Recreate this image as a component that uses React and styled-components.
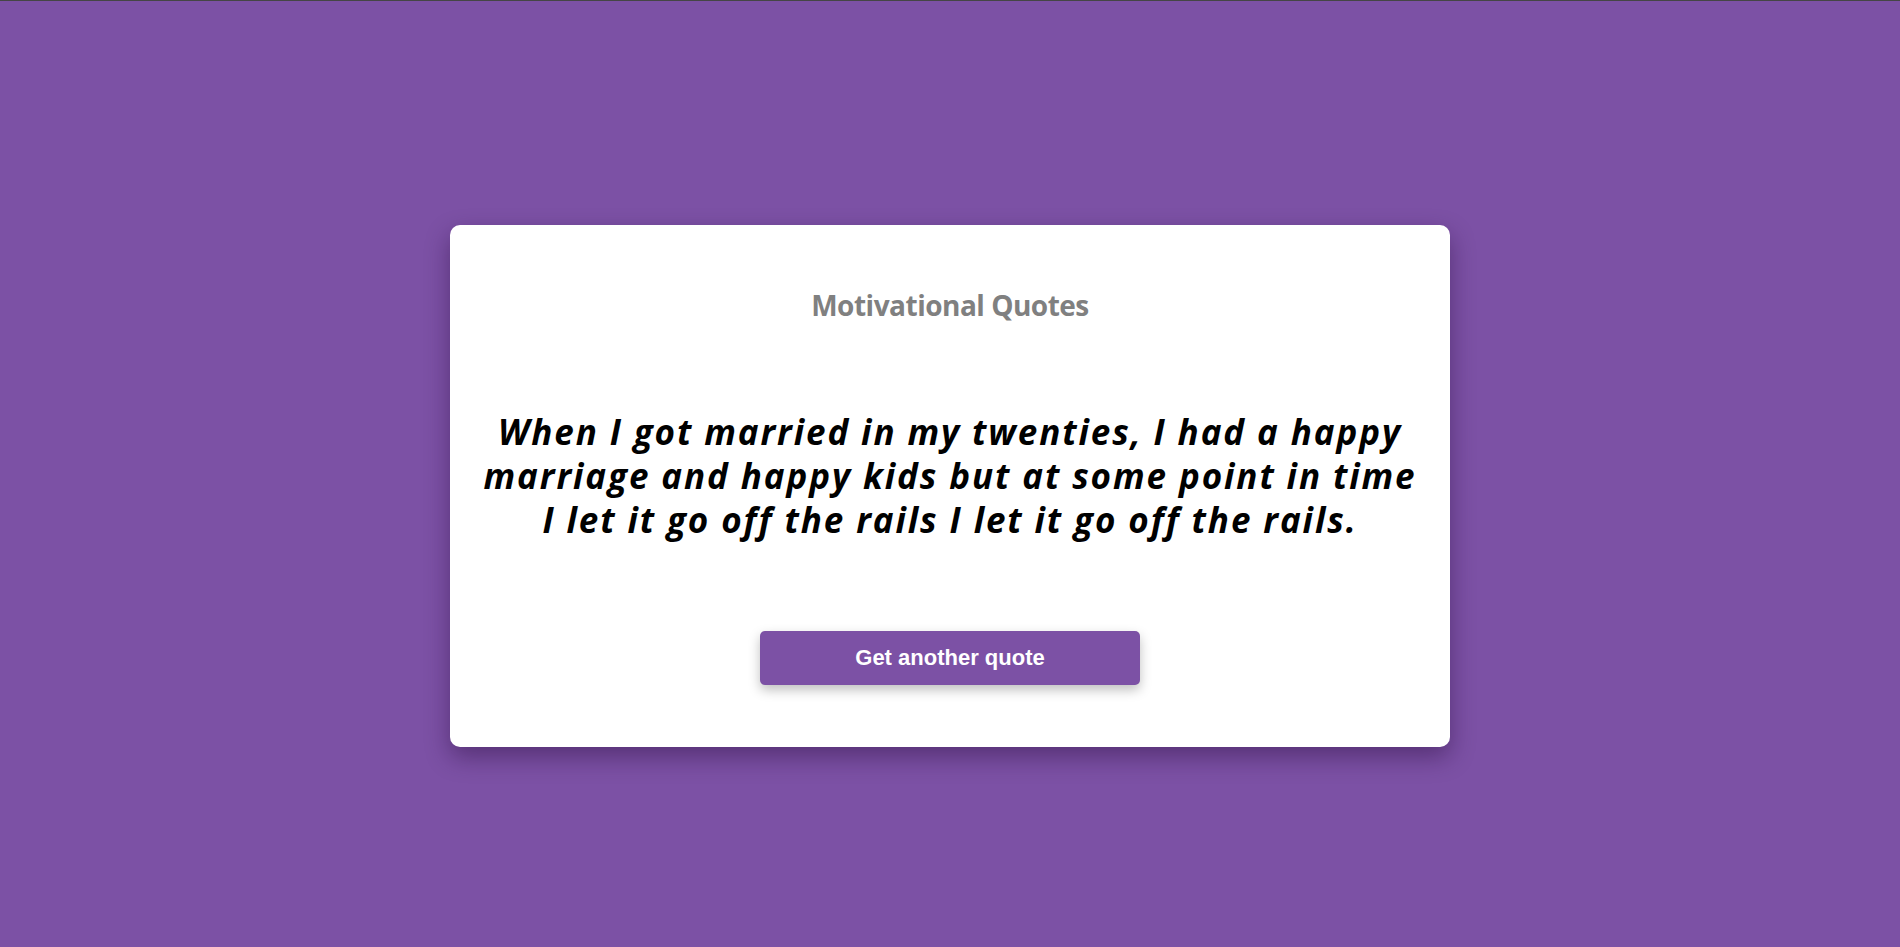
import React, { useState } from 'react';
import styled, { createGlobalStyle } from 'styled-components';

const GlobalStyle = createGlobalStyle`
  html, body {
    margin: 0;
    padding: 0;
  }
  body {
    background-color: #7c51a5;
    border-top: 1px solid #454545;
    font-family: "Noto Sans", "Open Sans", sans-serif;
  }
`;

const Page = styled.main`
  min-height: calc(100vh - 1px);
  box-sizing: border-box;
  padding-top: 24px;
  display: flex;
  align-items: center;
  justify-content: center;
`;

const Card = styled.section`
  width: 1000px;
  box-sizing: border-box;
  background: #fff;
  border-radius: 10px;
  box-shadow: 0 10px 24px rgba(40, 10, 60, 0.45);
  padding: 62px 25px 62px;
  display: flex;
  flex-direction: column;
  align-items: center;
  text-align: center;
`;

const Title = styled.h1`
  margin: 0;
  font-family: "Open Sans", sans-serif;
  font-weight: 700;
  font-size: 28px;
  line-height: 36px;
  letter-spacing: -0.5px;
  color: #808080;
`;

const Quote = styled.p`
  margin: 87px 0 89px;
  font-family: "Open Sans", sans-serif;
  font-style: italic;
  font-weight: 700;
  font-size: 35px;
  line-height: 44px;
  letter-spacing: 1.9px;
  color: #000;
`;

const Button = styled.button`
  width: 380px;
  height: 54px;
  border: none;
  border-radius: 5px;
  background-color: #7c51a5;
  color: #fff;
  font-family: "Liberation Sans", Arial, sans-serif;
  font-weight: 700;
  font-size: 22px;
  cursor: pointer;
  box-shadow: 0 5px 12px rgba(0, 0, 0, 0.25);
`;

const quotes = [
  'When I got married in my twenties, I had a happy marriage and happy kids but at some point in time I let it go off the rails I let it go off the rails.',
  'The secret of getting ahead is getting started.',
];

const App = () => {
  const [index, setIndex] = useState(0);

  return (
    <>
      <GlobalStyle />
      <Page>
        <Card>
          <Title>Motivational Quotes</Title>
          <Quote>{quotes[index]}</Quote>
          <Button onClick={() => setIndex((index + 1) % quotes.length)}>
            Get another quote
          </Button>
        </Card>
      </Page>
    </>
  );
};

export default App;
